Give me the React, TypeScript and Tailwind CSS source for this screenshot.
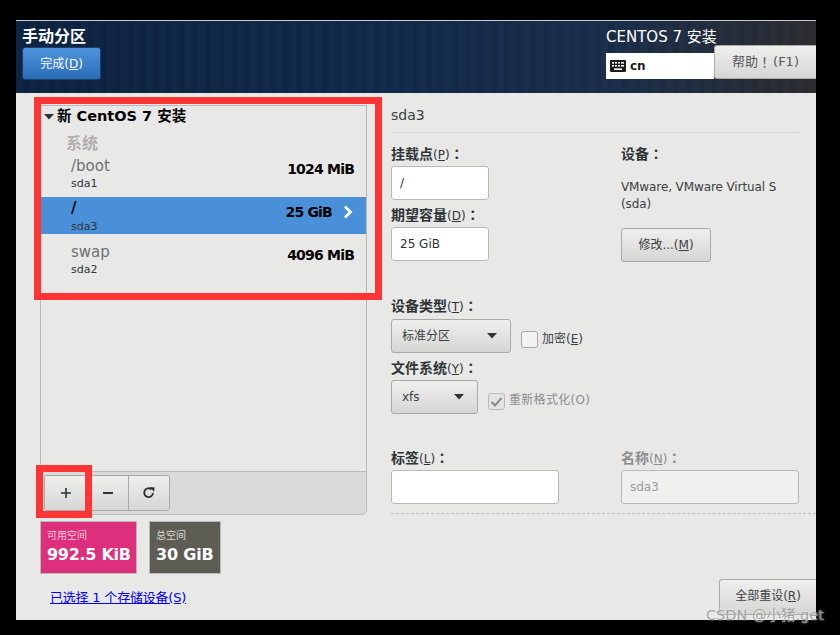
import React from "react";

const F = '"DejaVu Sans","Noto Sans CJK SC",sans-serif';

function U({ children }: { children: React.ReactNode }) {
  return <span className="underline underline-offset-1">{children}</span>;
}

function Colon() {
  return <span style={{ fontFamily: '"Noto Sans CJK TC",sans-serif' }}>：</span>;
}

function Label({ text, k, className = "" }: { text: string; k?: string; className?: string }) {
  return (
    <div className={`shrink-0 text-[14px] leading-[18px] font-bold text-[#2e3436] ${className}`}>
      {text}
      {k && (
        <span className="text-[12px] font-normal">
          (<U>{k}</U>)
        </span>
      )}
      <Colon />
    </div>
  );
}

const btn =
  "flex items-center rounded-[3px] border border-[#a9a9a6] bg-gradient-to-b from-[#efefee] to-[#d6d6d4] text-[#2e3436]";

function Row({ name, dev, size, selected, gray }: { name: string; dev: string; size: string; selected?: boolean; gray?: boolean }) {
  return (
    <div className={`flex h-[37px] items-start justify-between pl-[30px] pr-[12px] ${selected ? "bg-[#4a90d9]" : ""}`}>
      <div className="flex flex-col">
        <span className={`text-[15px] leading-[20px] ${selected ? "mt-[1px]" : "mt-[2px]"} ${gray ? "text-[#6f7070]" : "text-black font-bold"}`}>{name}</span>
        <span className={`text-[11px] leading-[14px] ${selected ? "mt-[2px]" : "mt-[1px]"} text-[#2e3436]`}>{dev}</span>
      </div>
      <div className="flex items-center mt-[5px] h-[20px]">
        <span className="text-[14px] font-bold text-black leading-[20px] tracking-[-0.8px]">{size}</span>
        {selected && (
          <svg width="11" height="14" viewBox="0 0 11 14" className="ml-[11px]">
            <path d="M2 1.5 L7.5 7 L2 12.5" fill="none" stroke="#fff" strokeWidth="2.6" />
          </svg>
        )}
      </div>
    </div>
  );
}

function Select({ text, w }: { text: string; w: string }) {
  return (
    <div className={`${btn} ${w} h-[34px] justify-between pl-[10px] pr-[13px]`}>
      <span className="text-[12px] text-[#3a3f41]">{text}</span>
      <svg width="10" height="6" viewBox="0 0 10 6"><path d="M0 0 H10 L5 5.5 Z" fill="#2e3436" /></svg>
    </div>
  );
}

export default function App() {
  return (
    <div className="w-[840px] h-[635px] bg-black pt-[20px] pl-[16px] overflow-hidden" style={{ fontFamily: F }}>
      <div className="relative w-[800px] h-[600px] bg-[#e8e8e7] flex flex-col">
        {/* header */}
        <header className="h-[73px] shrink-0 border-t border-[#c9ccd0] flex justify-between bg-[repeating-linear-gradient(90deg,rgba(255,255,255,0.012)_0px,rgba(255,255,255,0.012)_7px,rgba(0,0,0,0.03)_7px,rgba(0,0,0,0.03)_13px),linear-gradient(90deg,#0c2240_0%,#11294a_45%,#1a2d49_75%,#2b2c2f_100%)]">
          <div className="pl-[6px] pt-[6px]">
            <div className="text-[16px] leading-[20px] font-bold text-white">手动分区</div>
            <div className="flex h-[33px] w-[79px] items-center justify-center rounded-[3px] border border-[#17406f] bg-gradient-to-b from-[#4d93dc] to-[#2a6db5] text-[12px] text-white">
              完成(<U>D</U>)
            </div>
          </div>
          <div className="w-[210px] pt-[6px]">
            <div className="text-[15px] leading-[20px] text-white">CENTOS 7 安装</div>
            <div className="flex items-start -mt-[2px]">
              <div className="mt-[8px] flex h-[26px] w-[108px] items-center bg-white pl-[4px]">
                <svg width="16" height="12" viewBox="0 0 16 12">
                  <rect x="0" y="0" width="16" height="12" rx="1" fill="#1c1c1c" />
                  <g fill="#fff">
                    <rect x="2" y="2" width="2" height="1.6" /><rect x="5" y="2" width="2" height="1.6" /><rect x="8" y="2" width="2" height="1.6" /><rect x="11" y="2" width="3" height="1.6" />
                    <rect x="2" y="5" width="2" height="1.6" /><rect x="5" y="5" width="2" height="1.6" /><rect x="8" y="5" width="2" height="1.6" /><rect x="11" y="5" width="3" height="1.6" />
                    <rect x="4" y="8.4" width="8" height="1.6" />
                  </g>
                </svg>
                <span className="ml-[4px] text-[12px] font-bold text-[#1c1c1c]">cn</span>
              </div>
              <div className={`${btn} justify-center h-[34px] w-[102px] text-[13px] text-[#55595b] rounded-r-none border-r-0`}>
                帮助<span style={{ fontFamily: '"Noto Sans CJK TC",sans-serif' }}>！</span><span className="ml-[2px]">(F1)</span>
              </div>
            </div>
          </div>
        </header>

        {/* body */}
        <div className="flex flex-1 min-h-0 pt-[12px] pl-[24px]">
          {/* left */}
          <div className="w-[327px] shrink-0 flex flex-col">
            <div className="h-[410px] shrink-0 flex flex-col border border-[#b9b9b7] rounded-b-[5px] overflow-hidden">
              <div className="flex-1">
                <div className="flex items-center h-[20px] mt-[1px] pl-[3px]">
                  <svg width="10" height="6" viewBox="0 0 10 6"><path d="M0 0 H10 L5 5.5 Z" fill="#2e3436" /></svg>
                  <span className="ml-[3px] text-[14.5px] font-bold text-black">新 CentOS 7 安装</span>
                </div>
                <div className="pl-[25px] mt-[7px] h-[19px] text-[16px] leading-[19px] font-bold text-[#b0b0af]">系统</div>
                <div className="mt-[1px] flex flex-col gap-[6px]">
                  <Row name="/boot" dev="sda1" size="1024 MiB" gray />
                  <Row name="/" dev="sda3" size="25 GiB" selected />
                  <Row name="swap" dev="sda2" size="4096 MiB" gray />
                </div>
              </div>
              <div className="h-[43px] border-t border-[#b9b9b7] bg-[#d9d9d8] pl-[3px] pt-[3px]">
                <div className="flex h-[36px] w-[126px] rounded-[3px] border border-[#a9a9a6] overflow-hidden">
                  <div className="flex w-[42px] items-center justify-center bg-gradient-to-b from-[#efefee] to-[#d6d6d4]">
                    <svg width="12" height="12" viewBox="0 0 12 12" className="-ml-[1px]"><path d="M6 1 V11 M1 6 H11" stroke="#2e3436" strokeWidth="1.6" /></svg>
                  </div>
                  <div className="flex w-[41px] items-center justify-center border-l border-[#a9a9a6] bg-gradient-to-b from-[#efefee] to-[#d6d6d4]">
                    <svg width="12" height="12" viewBox="0 0 12 12"><path d="M1 6 H11" stroke="#2e3436" strokeWidth="1.8" /></svg>
                  </div>
                  <div className="flex flex-1 items-center justify-center border-l border-[#a9a9a6] bg-gradient-to-b from-[#efefee] to-[#d6d6d4]">
                    <svg width="14" height="14" viewBox="0 0 14 14">
                      <path d="M11 7 A4.4 4.4 0 1 1 9.6 3.5" fill="none" stroke="#2e3436" strokeWidth="1.9" />
                      <path d="M8 1 L12.6 1.4 L12 6 Z" fill="#2e3436" />
                    </svg>
                  </div>
                </div>
              </div>
            </div>
            <div className="mt-[6px] flex gap-[12px]">
              <div className="h-[53px] w-[97px] border border-[#b9b9b7] bg-[#dd2f7b] pl-[6px] pt-[8px] text-white">
                <div className="text-[10px] leading-[12px] text-[#f6c9dc]">可用空间</div>
                <div className="text-[16px] leading-[22px] font-bold whitespace-nowrap mt-[2px] tracking-[-0.3px]">992.5 KiB</div>
              </div>
              <div className="h-[53px] w-[72px] border border-[#b9b9b7] bg-[#5d5d55] pl-[6px] pt-[8px] text-white">
                <div className="text-[10px] leading-[12px] text-[#dcdcd8]">总空间</div>
                <div className="text-[16px] leading-[22px] font-bold whitespace-nowrap mt-[2px] tracking-[-0.2px]">30 GiB</div>
              </div>
            </div>
            <div className="mt-[15px] pl-[10px] text-[13px] leading-[18px] tracking-[-0.2px] text-[#0000ee] underline whitespace-nowrap">已选择 1 个存储设备(S)</div>
          </div>

          {/* right */}
          <div className="ml-[24px] w-[425px] flex flex-col">
            <div className="shrink-0 w-[408px] h-[28px] border-b border-[#d3d3d1] text-[14px] leading-[21px] text-[#3b4042]">sda3</div>
            <div className="mt-[11px] flex shrink-0">
              <div className="w-[230px]">
                <Label text="挂载点" k="P" />
                <div className="mt-[2px] flex h-[34px] w-[98px] items-center rounded-[3px] border border-[#b9b9b7] bg-white pl-[8px] text-[12px] text-[#2e3436]">/</div>
                <Label text="期望容量" k="D" className="mt-[5px]" />
                <div className="mt-[2px] flex h-[34px] w-[98px] items-center rounded-[3px] border border-[#b9b9b7] bg-white pl-[8px] text-[12px] text-[#2e3436]">25 GiB</div>
              </div>
              <div className="flex-1">
                <Label text="设备" />
                <div className="mt-[16px] text-[12px] leading-[17px] tracking-[-0.1px] text-[#3b4042]">VMware, VMware Virtual S<br />(sda)</div>
                <div className={`${btn} justify-center mt-[15px] h-[34px] w-[90px] text-[12px] text-[#3b4042]`}>修改...(<U>M</U>)</div>
              </div>
            </div>
            <Label text="设备类型" k="T" className="mt-[34px]" />
            <div className="mt-[3px] flex items-start shrink-0">
              <Select text="标准分区" w="w-[120px]" />
              <div className="ml-[10px] mt-[12px] h-[17px] w-[17px] rounded-[3px] border border-[#a9a9a6] bg-[#f2f2f1]" />
              <span className="ml-[4px] mt-[11px] text-[12px] leading-[18px] text-[#3b4042]">加密(<U>E</U>)</span>
            </div>
            <Label text="文件系统" k="Y" className="mt-[5px]" />
            <div className="mt-[2px] flex items-start shrink-0">
              <Select text="xfs" w="w-[87px]" />
              <div className="ml-[10px] mt-[13px] flex h-[17px] w-[17px] items-center justify-center rounded-[3px] border border-[#b9b9b7] bg-[#e4e4e3]">
                <svg width="13" height="12" viewBox="0 0 13 12"><path d="M1.5 6 L5 9.5 L11.5 2" fill="none" stroke="#8b8d8d" strokeWidth="2.2" /></svg>
              </div>
              <span className="ml-[4px] mt-[11px] text-[12px] leading-[18px] tracking-[0.3px] text-[#8b8d8d]">重新格式化(O)</span>
            </div>
            <div className="mt-[34px] flex shrink-0">
              <div className="w-[230px]">
                <Label text="标签" k="L" />
                <div className="mt-[2px] h-[34px] w-[168px] rounded-[3px] border border-[#b9b9b7] bg-white" />
              </div>
              <div>
                <Label text="名称" k="N" className="text-[#8b8d8d]" />
                <div className="mt-[2px] flex h-[34px] w-[178px] items-center rounded-[3px] border border-[#b9b9b7] bg-[#f0f0ef] pl-[8px] text-[12px] text-[#9a9c9c]">sda3</div>
              </div>
            </div>
            <div className="mt-[9px] border-t border-dashed border-[#bdbdbb]" />
            <div className="mt-[65px] flex justify-end">
              <div className={`${btn} justify-center h-[36px] w-[97px] pb-[3px] text-[12px] leading-[16px] text-[#3b4042] rounded-r-none border-r-0`}>全部重设(<U>R</U>)</div>
            </div>
          </div>
        </div>

        {/* red annotation boxes */}
        <div className="absolute left-[18px] top-[77px] h-[203px] w-[348px] border-[7px] border-[#ff3535]" />
        <div className="absolute left-[20px] top-[445px] h-[53px] w-[56px] border-[7px] border-[#ff3535]" />
        {/* watermark */}
        <div className="absolute left-[690px] top-[588px] text-[14.5px] leading-[14px] whitespace-nowrap text-[#9b9b9b] opacity-90 [text-shadow:0_0_2px_#ffffff]">CSDN @小猪.get</div>
      </div>
    </div>
  );
}
